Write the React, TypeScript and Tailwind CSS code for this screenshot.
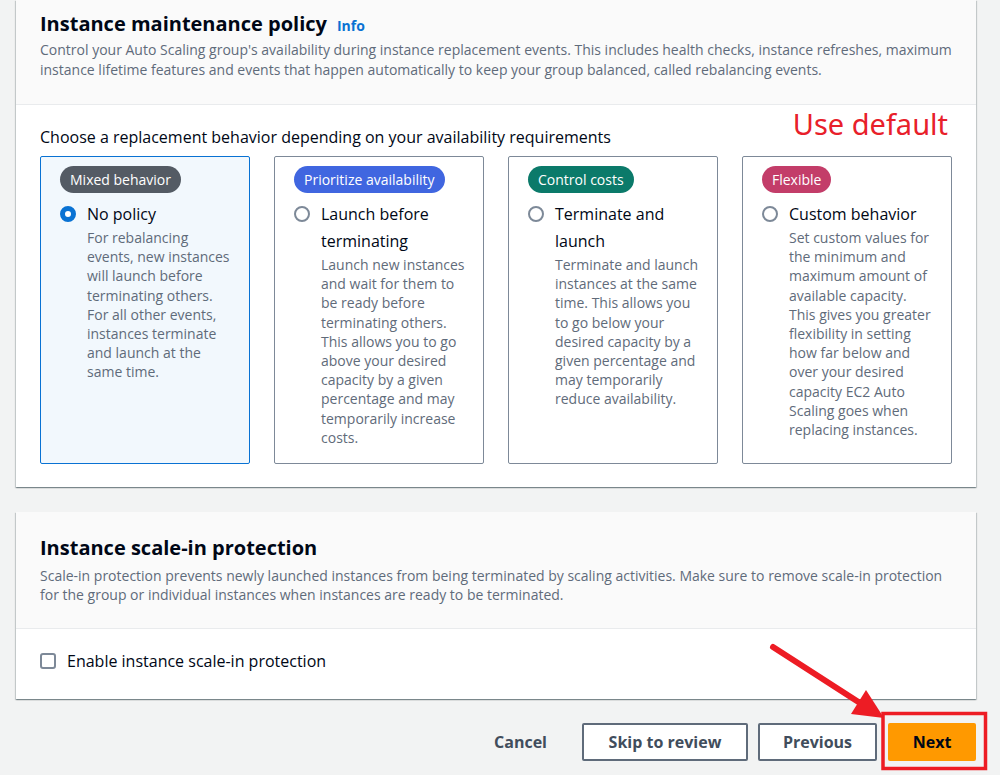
import React from "react";

type Option = {
  badge: string;
  badgeColor: string;
  label: string;
  lines: string[];
  selected?: boolean;
};

// description lines are kept as they break in the console
const options: Option[] = [
  {
    badge: "Mixed behavior",
    badgeColor: "bg-[#545b64]",
    label: "No policy",
    lines: [
      "For rebalancing",
      "events, new instances",
      "will launch before",
      "terminating others.",
      "For all other events,",
      "instances terminate",
      "and launch at the",
      "same time.",
    ],
    selected: true,
  },
  {
    badge: "Prioritize availability",
    badgeColor: "bg-[#4066e0]",
    label: "Launch before terminating",
    lines: [
      "Launch new instances",
      "and wait for them to",
      "be ready before",
      "terminating others.",
      "This allows you to go",
      "above your desired",
      "capacity by a given",
      "percentage and may",
      "temporarily increase",
      "costs.",
    ],
  },
  {
    badge: "Control costs",
    badgeColor: "bg-[#0b7a6a]",
    label: "Terminate and launch",
    lines: [
      "Terminate and launch",
      "instances at the same",
      "time. This allows you",
      "to go below your",
      "desired capacity by a",
      "given percentage and",
      "may temporarily",
      "reduce availability.",
    ],
  },
  {
    badge: "Flexible",
    badgeColor: "bg-[#c33d69]",
    label: "Custom behavior",
    lines: [
      "Set custom values for",
      "the minimum and",
      "maximum amount of",
      "available capacity.",
      "This gives you greater",
      "flexibility in setting",
      "how far below and",
      "over your desired",
      "capacity EC2 Auto",
      "Scaling goes when",
      "replacing instances.",
    ],
  },
];

const cardShadow =
  "shadow-[0_1px_1px_0_rgba(0,28,36,0.3),1px_1px_1px_0_rgba(0,28,36,0.15),-1px_1px_1px_0_rgba(0,28,36,0.15)]";

function OptionCard({ option }: { option: Option }) {
  return (
    <div
      className={`rounded-[2px] border pl-[19px] pr-3 pt-[9px] pb-4 ${
        option.selected
          ? "border-[#0972d3] bg-[#f2f8fd]"
          : "border-[#7d8998] bg-white"
      }`}
    >
      <span
        className={`inline-block rounded-full px-[10px] text-sm font-medium leading-[27px] text-white ${option.badgeColor}`}
      >
        {option.badge}
      </span>
      <div className="mt-2 flex gap-[11px]">
        {option.selected ? (
          <span className="mt-[5px] h-4 w-4 shrink-0 rounded-full border-[5px] border-[#0972d3] bg-white" />
        ) : (
          <span className="mt-[5px] h-4 w-4 shrink-0 rounded-full border-2 border-[#7d8998] bg-white" />
        )}
        <div className="pr-2">
          <div className="text-base leading-[27px] text-[#000716]">
            {option.label}
          </div>
          <p className="text-sm leading-[19.2px] text-[#5f6b7a]">
            {option.lines.map((line) => (
              <span key={line} className="block whitespace-nowrap">
                {line}
              </span>
            ))}
          </p>
        </div>
      </div>
    </div>
  );
}

export default function App() {
  return (
    <div className="relative h-[775px] w-[1000px] overflow-hidden bg-[#f2f3f3] font-['Open_Sans',sans-serif]">
      <div className="pl-4 pr-6">
        {/* maintenance policy card */}
        <section className={`bg-white ${cardShadow}`}>
          <div className="border-b border-[#e9ebed] bg-[#fafafa] px-6 pt-3 pb-6">
            <div className="flex items-baseline gap-[10px]">
              <h2 className="text-xl font-bold leading-6 text-[#000716]">
                Instance maintenance policy
              </h2>
              <a className="text-sm font-bold text-[#0972d3]">Info</a>
            </div>
            <p className="mt-1 text-sm leading-5 text-[#5f6b7a]">
              Control your Auto Scaling group's availability during instance
              replacement events. This includes health checks, instance
              refreshes, maximum instance lifetime features and events that
              happen automatically to keep your group balanced, called
              rebalancing events.
            </p>
          </div>
          <div className="relative px-6 pt-5 pb-[23px]">
            <span className="absolute right-[28px] top-[-3px] font-['Noto_Sans',sans-serif] text-[29px] text-[#e8202a]">
              Use default
            </span>
            <p className="text-base leading-6 text-[#000716]">
              Choose a replacement behavior depending on your availability
              requirements
            </p>
            <div className="mt-[7px] grid grid-cols-4 gap-6">
              {options.map((o) => (
                <OptionCard key={o.label} option={o} />
              ))}
            </div>
          </div>
        </section>

        {/* scale-in protection card */}
        <section className={`mt-[25px] bg-white ${cardShadow}`}>
          <div className="border-b border-[#e9ebed] bg-[#fafafa] px-6 pt-6 pb-6">
            <h2 className="text-xl font-bold leading-6 text-[#000716]">
              Instance scale-in protection
            </h2>
            <p className="mt-[6px] text-sm leading-[19px] text-[#5f6b7a]">
              Scale-in protection prevents newly launched instances from being
              terminated by scaling activities. Make sure to remove scale-in
              protection for the group or individual instances when instances
              are ready to be terminated.
            </p>
          </div>
          <div className="px-6 pt-5 pb-[26px]">
            <label className="flex items-center gap-[11px]">
              <span className="h-4 w-4 rounded-[3px] border-2 border-[#7d8998] bg-white" />
              <span className="text-base leading-6 text-[#000716]">
                Enable instance scale-in protection
              </span>
            </label>
          </div>
        </section>

        {/* wizard actions */}
        <div className="mt-6 flex items-center justify-end">
          <button className="mr-[15px] px-5 text-base font-bold leading-[38px] text-[#414d5c]">
            Cancel
          </button>
          <button className="mr-[10px] h-[38px] w-[166px] rounded-[2px] border-2 border-[#5f6b7a] bg-white text-base font-bold text-[#414d5c]">
            Skip to review
          </button>
          <button className="mr-[11px] h-[38px] w-[119px] rounded-[2px] border-2 border-[#5f6b7a] bg-white text-base font-bold text-[#414d5c]">
            Previous
          </button>
          <button className="h-[38px] w-[88px] rounded-[2px] bg-[#ff9900] text-base font-bold text-[#000716]">
            Next
          </button>
        </div>
      </div>

      {/* annotation overlay */}
      <svg
        className="pointer-events-none absolute left-0 top-0"
        width="1000"
        height="775"
        viewBox="0 0 1000 775"
      >
        <line
          x1="773"
          y1="647"
          x2="860"
          y2="703"
          stroke="#ed1c24"
          strokeWidth="6"
          strokeLinecap="round"
        />
        <polygon points="851,714 866,690 884,718" fill="#ed1c24" />
        <rect
          x="883"
          y="713.5"
          width="102.5"
          height="55"
          fill="none"
          stroke="#ed1c24"
          strokeWidth="3.5"
        />
      </svg>
    </div>
  );
}
